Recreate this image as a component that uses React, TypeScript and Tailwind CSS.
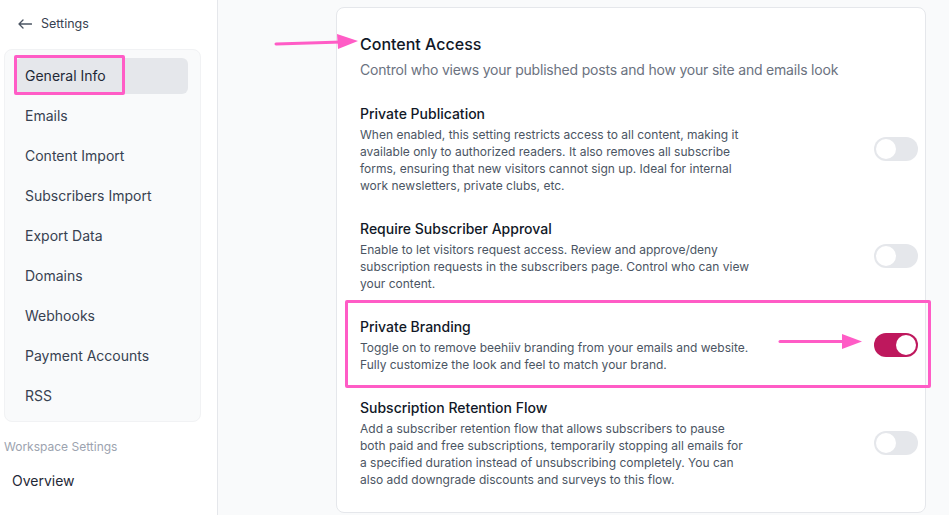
import React from "react";

const navItems = [
  "General Info",
  "Emails",
  "Content Import",
  "Subscribers Import",
  "Export Data",
  "Domains",
  "Webhooks",
  "Payment Accounts",
  "RSS",
];

function Toggle({ on }: { on?: boolean }) {
  return (
    <div
      className={
        on
          ? "relative w-11 h-6 rounded-full bg-[#be185d] shrink-0"
          : "relative w-11 h-6 rounded-full bg-[#e5e7eb] shrink-0"
      }
    >
      <div
        className={
          on
            ? "absolute top-[2px] left-[22px] w-5 h-5 rounded-full bg-white"
            : "absolute top-[2px] left-[2px] w-5 h-5 rounded-full bg-white shadow-[0_0_0_1px_#e5e7eb]"
        }
      />
    </div>
  );
}

function Row({
  title,
  desc,
  on,
  highlight,
}: {
  title: string;
  desc: string;
  on?: boolean;
  highlight?: boolean;
}) {
  return (
    <div className="relative flex items-center justify-between">
      {highlight && (
        <div className="absolute top-[-17px] left-[-15px] w-[586px] h-[88px] border-[3px] border-[#ff5cc6] rounded-[2px] pointer-events-none" />
      )}
      <div className="w-[392px]">
        <p className="text-sm leading-5 font-medium text-[#111827]">{title}</p>
        <p className="mt-0.5 text-xs leading-[17px] text-[#4b5563]">{desc}</p>
      </div>
      <Toggle on={on} />
    </div>
  );
}

export default function App() {
  return (
    <div className="relative w-[949px] h-[515px] overflow-hidden flex bg-[#f9fafb] font-['Inter',sans-serif]">
      <aside className="w-[218px] h-full shrink-0 bg-white border-r border-[#e5e7eb]">
        <div className="h-[48px] flex items-center gap-[9px] pl-[18px]">
          <svg width="14" height="10" viewBox="0 0 14 10" fill="none" stroke="#4b5563" strokeWidth="1.3" strokeLinecap="round" strokeLinejoin="round">
            <path d="M1 5H13.5M5 1L1 5L5 9" />
          </svg>
          <span className="text-[12.5px] text-[#374151]">Settings</span>
        </div>
        <div className="mt-[1px] ml-[4px] w-[197px] rounded-lg border border-[#f1f2f4] bg-[#f9fafb] pt-2 pb-[7px] pl-[10px] pr-[12px]">
          <div className="flex flex-col gap-1">
            {navItems.map((item, i) => (
              <div
                key={item}
                className={
                  i === 0
                    ? "relative h-9 flex items-center px-2.5 rounded-md bg-[#e5e7eb] text-sm text-[#1f2937]"
                    : "relative h-9 flex items-center px-2.5 rounded-md text-sm text-[#374151]"
                }
              >
                {i === 0 && (
                  <div className="absolute top-[-3px] left-[-1px] w-[111px] h-[40px] border-[3px] border-[#ff5cc6] rounded-[2px] pointer-events-none" />
                )}
                {item}
              </div>
            ))}
          </div>
        </div>
        <p className="mt-[17px] pl-[4px] text-xs leading-4 text-[#9ca3af]">Workspace Settings</p>
        <p className="mt-4 pl-[12px] text-sm leading-5 text-[#1f2937]">Overview</p>
      </aside>

      <main className="flex-1 pl-[118px] pt-[7px]">
        <div className="w-[590px] bg-white border border-[#e5e7eb] rounded-lg pl-[23px] pr-[7px] pt-6 pb-6">
          <h2 className="text-base leading-6 font-medium text-[#111827]">Content Access</h2>
          <p className="mt-1 text-sm leading-5 tracking-[-0.2px] text-[#6b7280]">
            Control who views your published posts and how your site and emails look
          </p>
          <div className="mt-6 flex flex-col gap-[25px]">
            <Row
              title="Private Publication"
              desc="When enabled, this setting restricts access to all content, making it available only to authorized readers. It also removes all subscribe forms, ensuring that new visitors cannot sign up. Ideal for internal work newsletters, private clubs, etc."
            />
            <Row
              title="Require Subscriber Approval"
              desc="Enable to let visitors request access. Review and approve/deny subscription requests in the subscribers page. Control who can view your content."
            />
            <Row
              title="Private Branding"
              desc="Toggle on to remove beehiiv branding from your emails and website. Fully customize the look and feel to match your brand."
              on
              highlight
            />
            <Row
              title="Subscription Retention Flow"
              desc="Add a subscriber retention flow that allows subscribers to pause both paid and free subscriptions, temporarily stopping all emails for a specified duration instead of unsubscribing completely. You can also add downgrade discounts and surveys to this flow."
            />
          </div>
        </div>
      </main>

      <svg
        className="absolute inset-0 pointer-events-none"
        width="949"
        height="515"
        viewBox="0 0 949 515"
      >
        <line x1="276" y1="44" x2="342" y2="42" stroke="#ff5cc6" strokeWidth="3" strokeLinecap="round" />
        <polygon points="337,34 358,41 338,49" fill="#ff5cc6" />
        <line x1="780" y1="341.5" x2="846" y2="341.5" stroke="#ff5cc6" strokeWidth="3" strokeLinecap="round" />
        <polygon points="842,334 862,341.5 842,349" fill="#ff5cc6" />
      </svg>
    </div>
  );
}
